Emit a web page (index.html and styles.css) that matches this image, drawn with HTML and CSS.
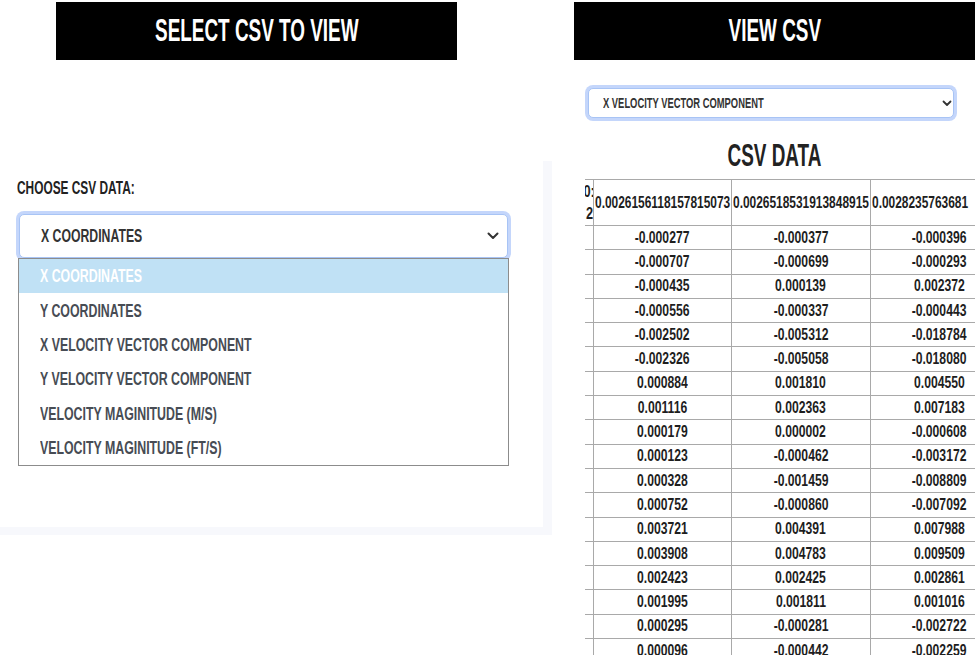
FILE: index.html
```html
<!DOCTYPE html>
<html>
<head>
<meta charset="utf-8">
<link rel="stylesheet" href="styles.css">
</head>
<body>
<div class="page">
  <section class="left">
    <div class="title-bar"><h1 class="title">SELECT CSV TO VIEW</h1></div>
    <div class="card">
      <label class="field-label"><span>CHOOSE CSV DATA:</span></label>
      <div class="select-wrap">
        <div class="select big">
          <span class="select-text">X COORDINATES</span>
          <svg class="chev" width="12" height="8" viewBox="0 0 12 8"><polyline points="1.5,1.5 6,6 10.5,1.5" fill="none" stroke="#333" stroke-width="2" stroke-linecap="round" stroke-linejoin="round"/></svg>
        </div>
        <ul class="menu">
          <li class="opt active"><span>X COORDINATES</span></li>
          <li class="opt"><span>Y COORDINATES</span></li>
          <li class="opt"><span>X VELOCITY VECTOR COMPONENT</span></li>
          <li class="opt"><span>Y VELOCITY VECTOR COMPONENT</span></li>
          <li class="opt"><span>VELOCITY MAGINITUDE (M/S)</span></li>
          <li class="opt"><span>VELOCITY MAGINITUDE (FT/S)</span></li>
        </ul>
      </div>
    </div>
  </section>
  <section class="right">
    <div class="title-bar"><h1 class="title">VIEW CSV</h1></div>
    <div class="select small">
      <span class="select-text">X VELOCITY VECTOR COMPONENT</span>
      <svg class="chev" width="10" height="7" viewBox="0 0 10 7"><polyline points="1.5,1.5 5,5 8.5,1.5" fill="none" stroke="#333" stroke-width="1.8" stroke-linecap="round" stroke-linejoin="round"/></svg>
    </div>
    <h2 class="data-title">CSV DATA</h2>
    <div class="table-wrap">
      <table class="csv">
        <colgroup><col class="c0"><col class="c1"><col class="c1"><col class="c1"></colgroup>
        <thead>
          <tr><th class="idx"><span>0:<br>2</span></th><th><span>0.0026156118157815073</span></th><th><span>0.0026518531913848915</span></th><th><span>0.0028235763681</span></th></tr>
        </thead>
        <tbody>
          <tr><td></td><td><span>-0.000277</span></td><td><span>-0.000377</span></td><td><span>-0.000396</span></td></tr>
          <tr><td></td><td><span>-0.000707</span></td><td><span>-0.000699</span></td><td><span>-0.000293</span></td></tr>
          <tr><td></td><td><span>-0.000435</span></td><td><span>0.000139</span></td><td><span>0.002372</span></td></tr>
          <tr><td></td><td><span>-0.000556</span></td><td><span>-0.000337</span></td><td><span>-0.000443</span></td></tr>
          <tr><td></td><td><span>-0.002502</span></td><td><span>-0.005312</span></td><td><span>-0.018784</span></td></tr>
          <tr><td></td><td><span>-0.002326</span></td><td><span>-0.005058</span></td><td><span>-0.018080</span></td></tr>
          <tr><td></td><td><span>0.000884</span></td><td><span>0.001810</span></td><td><span>0.004550</span></td></tr>
          <tr><td></td><td><span>0.001116</span></td><td><span>0.002363</span></td><td><span>0.007183</span></td></tr>
          <tr><td></td><td><span>0.000179</span></td><td><span>0.000002</span></td><td><span>-0.000608</span></td></tr>
          <tr><td></td><td><span>0.000123</span></td><td><span>-0.000462</span></td><td><span>-0.003172</span></td></tr>
          <tr><td></td><td><span>0.000328</span></td><td><span>-0.001459</span></td><td><span>-0.008809</span></td></tr>
          <tr><td></td><td><span>0.000752</span></td><td><span>-0.000860</span></td><td><span>-0.007092</span></td></tr>
          <tr><td></td><td><span>0.003721</span></td><td><span>0.004391</span></td><td><span>0.007988</span></td></tr>
          <tr><td></td><td><span>0.003908</span></td><td><span>0.004783</span></td><td><span>0.009509</span></td></tr>
          <tr><td></td><td><span>0.002423</span></td><td><span>0.002425</span></td><td><span>0.002861</span></td></tr>
          <tr><td></td><td><span>0.001995</span></td><td><span>0.001811</span></td><td><span>0.001016</span></td></tr>
          <tr><td></td><td><span>0.000295</span></td><td><span>-0.000281</span></td><td><span>-0.002722</span></td></tr>
          <tr><td></td><td><span>0.000096</span></td><td><span>-0.000442</span></td><td><span>-0.002259</span></td></tr>
        </tbody>
      </table>
    </div>
  </section>
</div>
</body>
</html>
```
FILE: styles.css
```css
* { box-sizing: border-box; }
html, body { margin: 0; padding: 0; background: #fff; }
body {
  font-family: "Liberation Sans", Arial, sans-serif;
  font-weight: bold;
  color: #222;
  overflow: hidden;
  height: 655px;
}
.page {
  display: flex;
  padding-top: 2px;
}
.left { width: 552px; flex: none; }
.right { width: 401px; margin-left: 22px; flex: none; }

.title-bar {
  width: 401px;
  height: 58px;
  background: #000;
  display: flex;
  align-items: center;
  justify-content: center;
}
.left .title-bar { margin-left: 56px; }
.title {
  margin: 0;
  color: #fff;
  font-size: 31px;
  font-weight: bold;
  transform: scaleX(0.61);
}

.card {
  margin-top: 101px;
  height: 374px;
  background: #fff;
  border-right: 9px solid #f7f8fc;
  border-bottom: 8px solid #f7f8fc;
  padding: 17px 0 0 16px;
}
.field-label {
  display: block;
  font-size: 18px;
  color: #222;
  height: 33px;
  padding-left: 1px;
}
.field-label span, .opt span, .select-text {
  display: inline-block;
  white-space: nowrap;
  transform-origin: left center;
}
.field-label span { transform: scaleX(0.66); }
.select-wrap { position: relative; width: 495px; }
.select {
  display: flex;
  align-items: center;
  justify-content: space-between;
  background: #fff;
  border: 1px solid #a8c4f5;
  box-shadow: 0 0 0 3px #c4d6fb;
  border-radius: 5px;
}
.select.big {
  margin: 3px;
  height: 44px;
  padding: 0 8px 0 21px;
}
.big .select-text { font-size: 19px; color: #333; transform: scaleX(0.645); }
.menu {
  position: absolute;
  left: 2px;
  top: 44px;
  width: 491px;
  height: 208px;
  margin: 0;
  padding: 0;
  list-style: none;
  background: #fff;
  border: 1px solid #8c8c8c;
}
.opt {
  height: 34.4px;
  display: flex;
  align-items: center;
  padding-left: 21px;
  font-size: 19px;
  color: #474c54;
}
.opt span { transform: scaleX(0.65); }
.opt.active { background: #c0e1f5; color: #fff; }

.select.small {
  margin: 28px 0 0 14px;
  width: 366px;
  height: 30px;
  padding: 0 1px 0 14px;
}
.small .select-text { font-size: 14px; color: #333; transform: scaleX(0.67); }

.data-title {
  margin: 18px 0 0 0;
  text-align: center;
  font-size: 31px;
  line-height: 40px;
  transform: scaleX(0.61);
}
.table-wrap {
  margin: 3px 0 0 11px;
  width: 390px;
  overflow: hidden;
}
.csv {
  table-layout: fixed;
  border-collapse: collapse;
  width: 423px;
  font-size: 16px;
  color: #1e1e1e;
}
.c0 { width: 8px; }
.c1 { width: 138.5px; }
.csv th, .csv td {
  border: 1px solid #a9a9a9;
  padding: 0;
  text-align: center;
  white-space: nowrap;
  overflow: hidden;
}
.csv th {
  height: 46px;
  font-weight: bold;
  text-align: left;
  padding-left: 1px;
}
.csv td { height: 24.3px; }
.csv td span {
  display: inline-block;
  margin: 0 -30px;
  transform: scaleX(0.76);
}
.csv th span {
  display: inline-block;
  transform: scaleX(0.745);
  transform-origin: left center;
}
.csv tr > :first-child { border-left: none; }
.csv th.idx { direction: rtl; line-height: 22px; padding: 0; }
.csv th.idx span {
  direction: ltr;
  display: block;
  width: 12px;
  margin: 0;
  text-align: right;
  transform: scaleX(0.8);
  transform-origin: right center;
}
```
